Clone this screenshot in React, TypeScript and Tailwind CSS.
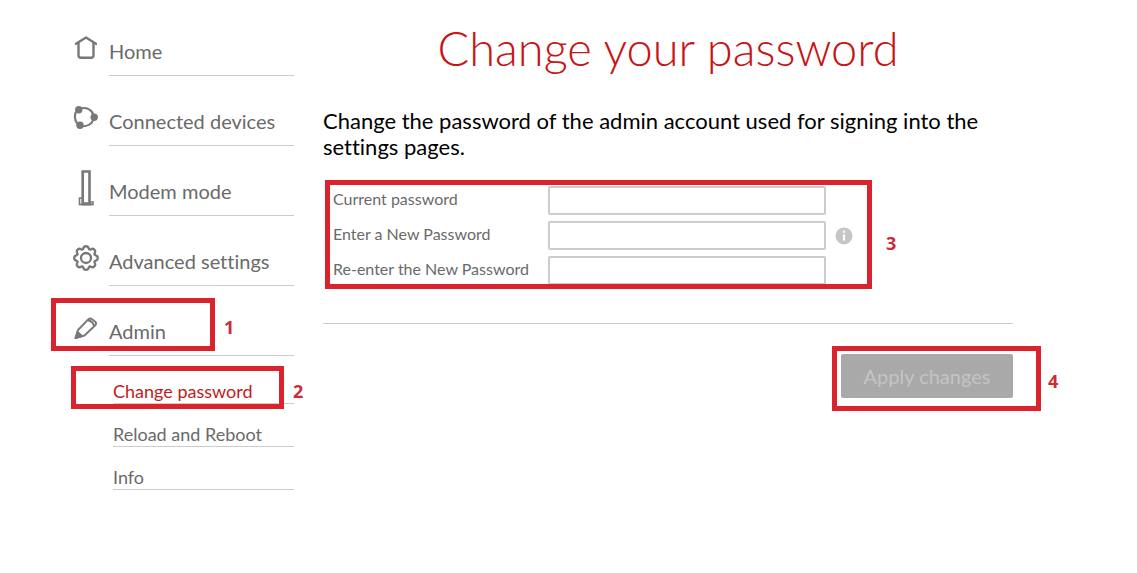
import React from "react";

function Marker({ box, label, children }: { box: string; label: string; children: string }) {
  return (
    <>
      <span aria-hidden="true" className={`pointer-events-none absolute border-5 border-[#da232c] ${box}`} />
      <span className={`pointer-events-none absolute font-['Open_Sans',sans-serif] text-lg leading-5 font-bold text-[#cf2a35] ${label}`}>
        {children}
      </span>
    </>
  );
}

const strokeProps = {
  fill: "none",
  stroke: "#77787a",
  strokeWidth: 2,
  strokeLinecap: "round" as const,
  strokeLinejoin: "round" as const,
};

function HomeIcon() {
  return (
    <svg viewBox="0 0 26 36" className="h-9 w-[26px]" {...strokeProps} strokeWidth={2.4} aria-hidden="true">
      <path d="M3 13.800 13 7.500l10 6.300" />
      <path d="M5.500 13v12.200q0 2.600 2.600 2.600h9.800q2.600 0 2.600-2.600V13" />
    </svg>
  );
}

function DevicesIcon() {
  return (
    <svg viewBox="0 0 26 36" className="h-9 w-[26px]" {...strokeProps} strokeWidth={2.1} aria-hidden="true">
      <path d="M7 8.500c7-1.600 12.500 1.500 13.500 7M20.500 19.500c-2 5-7 7.300-12 6.500M4.500 24C1.300 19.500 1.300 14 4 10" />
      <g fill="#77787a" stroke="none">
        <circle cx="5.800" cy="9.700" r="3.700" />
        <circle cx="21.200" cy="17.300" r="3.700" />
        <circle cx="7" cy="25.300" r="3.700" />
      </g>
    </svg>
  );
}

function ModemIcon() {
  return (
    <svg viewBox="0 0 26 36" className="h-9 w-[26px]" {...strokeProps} strokeLinecap="butt" strokeLinejoin="miter" aria-hidden="true">
      <path d="M9.700 1.500h6.800v32H9.700z" strokeWidth="2.600" />
      <path d="M9 28H6.500v6.500H20V32h-3" strokeWidth="1.600" />
      <path d="M8.500 34.200h10" strokeWidth="2.600" />
    </svg>
  );
}

function GearIcon() {
  return (
    <svg viewBox="0 0 26 36" className="h-9 w-[26px]" {...strokeProps} strokeWidth={2.3} aria-hidden="true">
      <path d="M10.300 8.300a2.800 2.800 0 0 1 5.400 0l.4.900 1 .4.900-.4a2.800 2.800 0 0 1 3.800 3.800l-.4.900.4 1 .9.400a2.800 2.800 0 0 1 0 5.400l-.9.400-.4 1 .4.900a2.800 2.800 0 0 1-3.800 3.800l-.9-.4-1 .4-.4.900a2.800 2.800 0 0 1-5.400 0l-.4-.9-1-.4-.9.400a2.800 2.800 0 0 1-3.800-3.800l.4-.9-.4-1-.9-.4a2.800 2.800 0 0 1 0-5.400l.9-.4.4-1-.4-.9A2.800 2.800 0 0 1 8 9.200l.9.400 1-.4z" />
      <circle cx="13" cy="18" r="5" />
    </svg>
  );
}

function PencilIcon() {
  return (
    <svg viewBox="0 0 26 36" className="h-9 w-[26px]" {...strokeProps} strokeWidth={1.9} aria-hidden="true">
      <path d="M2.500 28 5 20 15.500 9.200q1.800-1.600 3.600 0l3.200 2.500q1.600 1.800 0 3.600L11.500 25.500z" />
      <path d="M15 10.200q5 1 6 5.800" />
      <path d="m2.500 28 2-6 4.500 4z" fill="#77787a" />
    </svg>
  );
}

const menu = [
  { label: "Home", icon: <HomeIcon /> },
  { label: "Connected devices", icon: <DevicesIcon /> },
  { label: "Modem mode", icon: <ModemIcon /> },
  { label: "Advanced settings", icon: <GearIcon /> },
  {
    label: "Admin",
    icon: <PencilIcon />,
    marker: <Marker box="-left-[22px] top-3 h-[53px] w-[164px]" label="left-[151px] top-[31px]">1</Marker>,
  },
];

const adminMenu = [
  {
    label: "Change password",
    active: true,
    marker: <Marker box="-left-[42px] top-[5px] h-[43px] w-[213px]" label="left-[180px] top-5">2</Marker>,
  },
  { label: "Reload and Reboot" },
  { label: "Info" },
];

const fields = [
  { id: "current", label: "Current password" },
  { id: "new", label: "Enter a New Password", info: true },
  { id: "repeat", label: "Re-enter the New Password" },
];

export default function App() {
  return (
    <div className="flex min-h-screen gap-[29px] bg-white pt-1.5 pr-6 pb-6 pl-[73px] font-[Lato,sans-serif] text-[#6a6a6a] [font-variant-ligatures:none]">
      <nav aria-label="Settings" className="w-[221px] shrink-0">
        <ul>
          {menu.map((item) => (
            <li key={item.label} className="relative">
              <a href="#" className="flex h-[70px] items-end">
                <span className="w-9 pb-2.5">{item.icon}</span>
                <span className="flex-1 border-b border-[#cccccc] pb-2.5 text-xl leading-7">{item.label}</span>
              </a>
              {item.marker}
            </li>
          ))}
        </ul>
        <ul className="pt-[5px] pl-10">
          {adminMenu.map((item) => (
            <li key={item.label} className="relative">
              <a
                href="#"
                aria-current={item.active ? "page" : undefined}
                className={`flex h-[43px] items-end border-b border-[#cccccc] text-lg leading-6 ${item.active ? "text-[#c41a1a]" : ""}`}
              >
                {item.label}
              </a>
              {item.marker}
            </li>
          ))}
        </ul>
      </nav>

      <main className="max-w-[690px] min-w-0 flex-1 pt-3">
        <h1 className="text-center text-[47px] leading-[60px] font-light text-[#c81414]">Change your password</h1>
        <p className="mt-[30px] text-[22px] leading-[26px] text-black">
          Change the password of the admin account used for signing into the settings pages.
        </p>
        <form onSubmit={(e) => e.preventDefault()}>
          <div className="relative flex flex-col gap-1.5 border-b border-[#cccccc] pt-[26px] pb-[38px] pl-2.5">
            {fields.map((field) => (
              <div key={field.id} className="flex items-start">
                <label htmlFor={field.id} className="w-[215px] text-base leading-[25px]">
                  {field.label}
                </label>
                <input
                  id={field.id}
                  type="password"
                  className="h-[29px] w-[278px] rounded-xs border-2 border-[#cccccc] bg-white px-2 outline-none"
                />
                {field.info && (
                  <svg viewBox="0 0 18 18" className="ml-[9px] size-[18px] self-center" role="img" aria-label="Password information">
                    <circle cx="9" cy="9" r="8.500" fill="#c6c6c6" />
                    <path d="M9 3.800v2M9 7.400v6" stroke="#fff" strokeWidth="2.200" />
                  </svg>
                )}
              </div>
            ))}
            <Marker box="left-0.5 top-5 h-[109px] w-[547px]" label="left-[563px] top-[73px]">3</Marker>
          </div>
          <div className="flex justify-end pt-[30px]">
            <div className="relative">
              <button type="submit" disabled className="block h-11 w-[172px] rounded-xs bg-[#a9a9a9] text-xl text-[#c4c4c4]">
                Apply changes
              </button>
              <Marker box="-left-[9px] -top-2 h-[65px] w-[209px]" label="left-[207px] top-[17px]">4</Marker>
            </div>
          </div>
        </form>
      </main>
    </div>
  );
}
